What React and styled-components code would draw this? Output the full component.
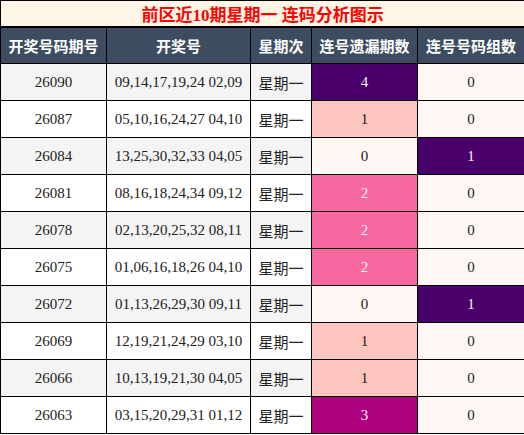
import React from 'react';
import styled, { createGlobalStyle } from 'styled-components';

const GlobalStyle = createGlobalStyle`
  body {
    margin: 0;
    background: #ffffff;
    font-family: "Liberation Serif", "Noto Sans CJK SC", serif;
  }
`;

const Table = styled.table`
  width: 524px;
  border-collapse: collapse;
  table-layout: fixed;
  font-family: "Liberation Serif", "Noto Sans CJK SC", serif;
`;

const TitleCell = styled.th`
  height: 25px;
  padding: 0;
  background-color: #fdf5e6;
  color: #ff0000;
  font-size: 17px;
  font-weight: bold;
  text-align: center;
  border: 1px solid #000;
  border-bottom-width: 2px;
`;

const HeadCell = styled.th`
  height: 35px;
  padding: 0;
  background-color: #3e4c61;
  color: #ffffff;
  font-size: 15px;
  font-weight: bold;
  text-align: center;
  border: 1px solid #000;
`;

const Cell = styled.td`
  height: 36px;
  padding: 0;
  text-align: center;
  font-size: 15px;
  color: ${props => (props.light ? '#f2f2f2' : '#222222')};
  background-color: ${props => props.bg || 'transparent'};
  border: 1px solid #000;
`;

const Row = styled.tr`
  background-color: ${props => (props.shade ? '#f4f4f4' : '#ffffff')};
`;

// RdPu scale
const missColors = {
  0: { bg: '#fff7f3', light: false },
  1: { bg: '#fcc5c0', light: false },
  2: { bg: '#f768a1', light: true },
  3: { bg: '#ae017e', light: true },
  4: { bg: '#49006a', light: true },
};

const groupColors = {
  0: { bg: '#fff7f3', light: false },
  1: { bg: '#49006a', light: true },
};

const rows = [
  { issue: '26090', nums: '09,14,17,19,24 02,09', miss: 4, groups: 0 },
  { issue: '26087', nums: '05,10,16,24,27 04,10', miss: 1, groups: 0 },
  { issue: '26084', nums: '13,25,30,32,33 04,05', miss: 0, groups: 1 },
  { issue: '26081', nums: '08,16,18,24,34 09,12', miss: 2, groups: 0 },
  { issue: '26078', nums: '02,13,20,25,32 08,11', miss: 2, groups: 0 },
  { issue: '26075', nums: '01,06,16,18,26 04,10', miss: 2, groups: 0 },
  { issue: '26072', nums: '01,13,26,29,30 09,11', miss: 0, groups: 1 },
  { issue: '26069', nums: '12,19,21,24,29 03,10', miss: 1, groups: 0 },
  { issue: '26066', nums: '10,13,19,21,30 04,05', miss: 1, groups: 0 },
  { issue: '26063', nums: '03,15,20,29,31 01,12', miss: 3, groups: 0 },
];

export default function App() {
  return (
    <>
      <GlobalStyle />
      <Table>
        <colgroup>
          <col style={{ width: 106 }} />
          <col style={{ width: 144 }} />
          <col style={{ width: 61 }} />
          <col style={{ width: 106 }} />
          <col style={{ width: 107 }} />
        </colgroup>
        <thead>
          <tr>
            <TitleCell colSpan={5}>前区近10期星期一 连码分析图示</TitleCell>
          </tr>
          <tr>
            <HeadCell>开奖号码期号</HeadCell>
            <HeadCell>开奖号</HeadCell>
            <HeadCell>星期次</HeadCell>
            <HeadCell>连号遗漏期数</HeadCell>
            <HeadCell>连号号码组数</HeadCell>
          </tr>
        </thead>
        <tbody>
          {rows.map((r, i) => (
            <Row key={r.issue} shade={i % 2 === 0}>
              <Cell>{r.issue}</Cell>
              <Cell>{r.nums}</Cell>
              <Cell>星期一</Cell>
              <Cell bg={missColors[r.miss].bg} light={missColors[r.miss].light}>
                {r.miss}
              </Cell>
              <Cell bg={groupColors[r.groups].bg} light={groupColors[r.groups].light}>
                {r.groups}
              </Cell>
            </Row>
          ))}
        </tbody>
      </Table>
    </>
  );
}
